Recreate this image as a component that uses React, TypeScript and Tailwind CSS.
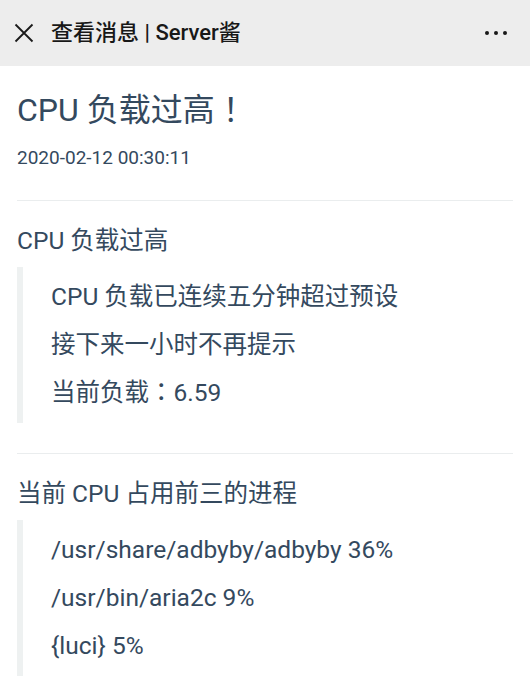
import React from 'react';

const font = { fontFamily: 'Roboto, "Noto Sans CJK SC", sans-serif' };
const punct = { fontFamily: '"Noto Sans CJK TC", sans-serif' };

interface Section {
    heading: string;
    lines: React.ReactNode[];
}

const sections: Section[] = [
    {
        heading: 'CPU 负载过高',
        lines: [
            'CPU 负载已连续五分钟超过预设',
            '接下来一小时不再提示',
            <>当前负载<span className="leading-none" style={punct}>：</span>6.59</>,
        ],
    },
    {
        heading: '当前 CPU 占用前三的进程',
        lines: ['/usr/share/adbyby/adbyby 36%', '/usr/bin/aria2c 9%', '{luci} 5%'],
    },
];

const CloseIcon = () => (
    <svg width="20" height="20" viewBox="0 0 20 20" className="shrink-0">
        <path d="M1.5 1.5 L18.5 18.5 M18.5 1.5 L1.5 18.5" stroke="#1a1a1a" strokeWidth="1.8" />
    </svg>
);

export default function App() {
    return (
        <div className="w-[530px] min-h-[699px] bg-white text-[#34495e]" style={font}>
            <div className="h-[66px] bg-[#ededed] flex items-center pl-[14px] pr-[23px]">
                <CloseIcon />
                <div className="ml-[17px] text-[22px] font-medium text-[#181818] leading-none">查看消息 | Server酱</div>
                <div className="ml-auto flex gap-[5px] items-center">
                    <span className="w-[4px] h-[4px] rounded-full bg-[#181818]" />
                    <span className="w-[4px] h-[4px] rounded-full bg-[#181818]" />
                    <span className="w-[4px] h-[4px] rounded-full bg-[#181818]" />
                </div>
            </div>

            <div className="px-[17px]">
                <h1 className="mt-[24px] h-[40px] text-[32px] leading-[40px]">
                    CPU 负载过高<span className="leading-none" style={punct}>！</span>
                </h1>
                <div className="mt-[16px] text-[19px] leading-[24px]">2020-02-12 00:30:11</div>

                {sections.map((section) => (
                    <div key={section.heading}>
                        <div className="mt-[30px] h-px bg-[#eaedee]" />
                        <h2 className="mt-[24px] text-[24.5px] leading-[32px]">{section.heading}</h2>
                        <div className="mt-[10px] border-l-[6px] border-[#eef1f1] pl-[28px] py-[6px]">
                            {section.lines.map((line, i) => (
                                <p key={i} className="h-[48px] text-[24.5px] leading-[48px]">{line}</p>
                            ))}
                        </div>
                    </div>
                ))}
            </div>
        </div>
    );
}
